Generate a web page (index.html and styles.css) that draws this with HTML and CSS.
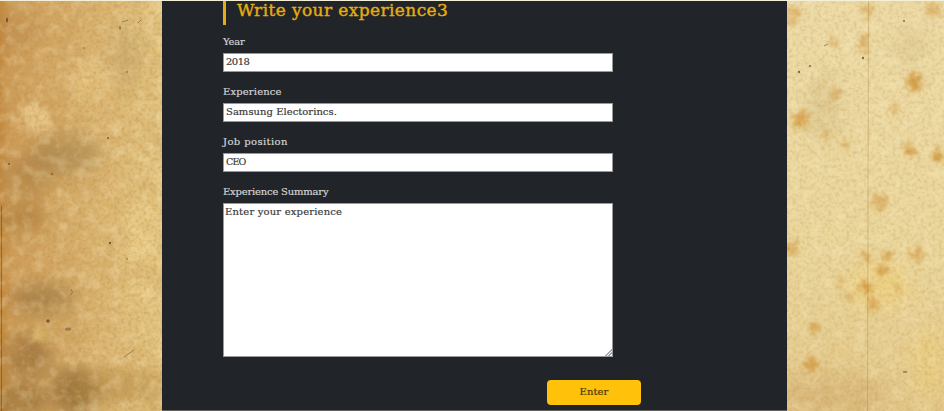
FILE: index.html
```
<!DOCTYPE html>
<html lang="en">
<head>
<meta charset="utf-8">
<title>Write your experience</title>
<link rel="stylesheet" href="styles.css">
</head>
<body>
<svg class="parchment" viewBox="0 0 944 411" aria-hidden="true">
  <defs>
    <linearGradient id="left"><stop offset="0" stop-color="#c4893e"/><stop offset=".07" stop-color="#cf9d59"/><stop offset=".55" stop-color="#dab36f"/><stop offset="1" stop-color="#e5c782"/></linearGradient>
    <linearGradient id="right" x2="0" y2="1"><stop offset="0" stop-color="#eddba6"/><stop offset=".6" stop-color="#ebd79c"/><stop offset="1" stop-color="#e3c88a"/></linearGradient>
    <filter id="soft" x="-50%" y="-50%" width="200%" height="200%"><feGaussianBlur stdDeviation="9"/></filter>
    <filter id="stain" x="-50%" y="-50%" width="200%" height="200%"><feTurbulence type="fractalNoise" baseFrequency=".18" numOctaves="3" seed="4" result="n"/><feGaussianBlur in="SourceGraphic" stdDeviation="2"/><feDisplacementMap in2="n" scale="15" xChannelSelector="R" yChannelSelector="G"/><feGaussianBlur stdDeviation=".9"/></filter>
    <filter id="grain" x="0" y="0" width="100%" height="100%"><feTurbulence type="fractalNoise" baseFrequency=".28" numOctaves="3" seed="8"/><feColorMatrix values="0 0 0 0 .46  0 0 0 0 .27  0 0 0 0 .08  1.5 0 0 0 -.62"/><feGaussianBlur stdDeviation=".35"/></filter>
    <filter id="light" x="0" y="0" width="100%" height="100%"><feTurbulence type="fractalNoise" baseFrequency=".09" numOctaves="4" seed="21"/><feColorMatrix values="0 0 0 0 1  0 0 0 0 .9  0 0 0 0 .6  0 1.6 0 0 -.7"/></filter>
    <filter id="cloud" x="0" y="0" width="100%" height="100%"><feTurbulence type="fractalNoise" baseFrequency=".035" numOctaves="4" seed="13"/><feColorMatrix values="0 0 0 0 .58  0 0 0 0 .34  0 0 0 0 .1  2 0 0 0 -.85"/></filter>
  </defs>
  <rect width="163" height="411" fill="url(#left)"/>
  <rect x="786" width="158" height="411" fill="url(#right)"/>
  <g filter="url(#soft)">
    <ellipse cx="65" cy="153" rx="35" ry="20" fill="#8b6b3b" opacity=".42"/>
    <ellipse cx="28" cy="176" rx="25" ry="20" fill="#92682f" opacity=".4"/>
    <ellipse cx="20" cy="217" rx="26" ry="15" fill="#9a6626" opacity=".5"/>
    <ellipse cx="43" cy="298" rx="32" ry="14" fill="#76552a" opacity=".5"/>
    <ellipse cx="28" cy="355" rx="24" ry="22" fill="#78501f" opacity=".5"/>
    <ellipse cx="75" cy="390" rx="25" ry="24" fill="#6a4519" opacity=".55"/>
    <ellipse cx="20" cy="400" rx="28" ry="16" fill="#6a4519" opacity=".5"/>
    <ellipse cx="125" cy="385" rx="40" ry="17" fill="#a87a30" opacity=".45"/>
    <ellipse cx="20" cy="30" rx="25" ry="20" fill="#a97736" opacity=".25"/>
    <ellipse cx="125" cy="55" rx="17" ry="30" fill="#b2935e" opacity=".35"/>
    <ellipse cx="89" cy="80" rx="18" ry="18" fill="#f3d390" opacity=".5"/>
    <ellipse cx="145" cy="245" rx="20" ry="65" fill="#f0d68f" opacity=".5"/>
    <ellipse cx="824" cy="105" rx="15" ry="35" fill="#c7ad73" opacity=".35"/>
    <ellipse cx="910" cy="45" rx="15" ry="13" fill="#c7ad73" opacity=".4"/>
    <ellipse cx="880" cy="285" rx="30" ry="22" fill="#f1cf70" opacity=".5"/>
    <ellipse cx="929" cy="360" rx="20" ry="35" fill="#edcf79" opacity=".5"/>
    <ellipse cx="830" cy="395" rx="55" ry="22" fill="#c99b5a" opacity=".35"/>
  </g>
  <g filter="url(#stain)">
    <path d="M19 104q16-6 27 5 10 12-5 25-18-4-22-30" fill="#f0d194" opacity=".65"/>
    <ellipse cx="40" cy="332" rx="7" ry="8" fill="#d8b362" opacity=".8"/>
  </g>
  <path d="M0 0h163v411H0z" filter="url(#cloud)" opacity=".5"/>
  <g filter="url(#stain)" fill="#cf9236">
    <g opacity=".8"><circle cx="915" cy="81" r="9"/><circle cx="801" cy="119" r="8"/><circle cx="910" cy="149" r="6"/><circle cx="938" cy="155" r="6"/><circle cx="792" cy="247" r="6"/><circle cx="866" cy="256" r="4"/><circle cx="886" cy="255" r="4"/><circle cx="917" cy="253" r="6"/><circle cx="883" cy="270" r="5"/><circle cx="866" cy="286" r="6"/><circle cx="873" cy="303" r="5"/><circle cx="813" cy="327" r="5"/><circle cx="812" cy="363" r="7"/></g>
    <g opacity=".5"><circle cx="792" cy="15" r="9"/><ellipse cx="867" cy="9" rx="6" ry="7"/><ellipse cx="864" cy="42" rx="6" ry="10"/><circle cx="933" cy="9" r="8"/><circle cx="833" cy="42" r="5"/><circle cx="835" cy="93" r="5"/><circle cx="895" cy="108" r="5"/><circle cx="827" cy="134" r="4"/><circle cx="845" cy="145" r="5"/><circle cx="879" cy="201" r="8"/><circle cx="842" cy="281" r="4"/><circle cx="849" cy="295" r="4"/><circle cx="834" cy="349" r="4"/><circle cx="897" cy="286" r="4"/></g>
  </g>
  <path d="M0 0h163v411H0z" filter="url(#grain)" opacity=".65"/>
  <path d="M786 0h158v411H786z" filter="url(#grain)" opacity=".42"/>
  <rect width="163" height="411" filter="url(#light)" opacity=".42"/>
  <rect x="786" width="158" height="411" filter="url(#light)" opacity=".4"/>
  <path d="M868.500 0L867.500 411" stroke="#a97e3b" stroke-width=".8" opacity=".45"/>
  <path d="M1.500 205V411" stroke="#6b421a" opacity=".5"/>
  <g fill="#4b3217" opacity=".65"><ellipse cx="7" cy="19" rx="1" ry="2.500"/><ellipse cx="120" cy="27" rx=".7" ry="1.800"/><circle cx="127" cy="71" r=".8"/><circle cx="84" cy="47" r=".8"/><circle cx="108" cy="137" r="1"/><circle cx="110" cy="242" r="1.200"/><circle cx="127" cy="258" r=".8"/><circle cx="48" cy="320" r="1.700"/><ellipse cx="68" cy="328" rx="3" ry="1.500" opacity=".6"/><circle cx="799" cy="71" r="1.200"/><circle cx="810" cy="65" r="1"/><circle cx="863" cy="57" r="1.200"/><circle cx="904" cy="20" r="1"/><ellipse cx="905" cy="371" rx="2.500" ry=".8"/><circle cx="9" cy="163" r="1"/><circle cx="52" cy="173" r="1.300" fill="#93571b"/></g>
  <path d="M122 21l6-2M138 22l3-3M70 294q4-2 1-6M824 45l4-2M124 356l10-7" fill="none" stroke="#6b4924" stroke-width=".8" opacity=".65"/>
</svg>
<main class="panel">
  <h1 class="title">Write your experience3</h1>
  <form class="form">
    <label class="label label-year" for="year">Year</label>
    <input class="field field-year" id="year" value="2018">
    <label class="label label-company" for="company">Experience</label>
    <input class="field field-company" id="company" value="Samsung Electorincs.">
    <label class="label label-job" for="job">Job position</label>
    <input class="field field-job" id="job" value="CEO">
    <label class="label" for="summary">Experience Summary</label>
    <textarea class="field summary" id="summary">Enter your experience</textarea>
    <button class="enter" type="button">Enter</button>
  </form>
</main>
</body>
</html>
```
FILE: styles.css
```
* { box-sizing: border-box; }
body {
  margin: 0;
  height: 411px;
  overflow: hidden;
  background: #e3c88b;
  font-family: "DejaVu Serif", serif;
  border-top: 1px solid #f3efd9;
}
.parchment {
  position: absolute;
  inset: 1px 0 0;
  width: 944px;
  height: 411px;
  z-index: -1;
}
.panel {
  width: 625px;
  height: 410px;
  margin-left: 162px;
  padding-left: 61px;
  background: #212429;
  border-bottom: 1px solid #62615e;
}
.title {
  height: 24px;
  margin: 0 0 11px;
  padding-left: 11px;
  border-left: 3px solid #e5ad10;
  color: #e5ad10;
  font-size: 17px;
  font-weight: 400;
  line-height: 19px;
  letter-spacing: .4px;
  -webkit-text-stroke: .4px #e5ad10;
  white-space: nowrap;
}
.form {
  display: flex;
  flex-direction: column;
  align-items: flex-start;
}
.label {
  height: 17px;
  color: #d4d4d4;
  font-size: 10px;
  line-height: 12px;
  letter-spacing: -.2px;
  -webkit-text-stroke: .2px #d4d4d4;
}
.label-company { letter-spacing: .15px; }
.label-job { letter-spacing: .4px; }
.field {
  width: 389.5px;
  height: 19px;
  margin: 0 0 14px;
  padding: 0 2px 3px;
  border: 1px solid #999;
  border-radius: 0;
  background: #fff;
  color: #3a3a3a;
  font: 10px/12px "DejaVu Serif", serif;
  -webkit-text-stroke: .2px #3a3a3a;
}
.field-year { letter-spacing: -.5px; }
.field-company { letter-spacing: .03px; }
.field-job { font-size: 9.5px; letter-spacing: -.8px; }
.summary {
  display: block;
  height: 154px;
  margin-bottom: 23px;
  padding: 2px 1px;
  letter-spacing: .18px;
  resize: none;
  background: #fff linear-gradient(135deg, #fff 48%, #aaa 50% 62%, #eee 64% 70%, #999 72% 84%, #fff 86%) no-repeat right bottom / 7px 7px;
}
.enter {
  width: 94px;
  height: 25px;
  margin-left: 324px;
  padding: 0 0 2px;
  border: 0;
  border-radius: 4px;
  background: #ffc10a;
  color: #49370b;
  font: 10px/12px "DejaVu Serif", serif;
  letter-spacing: .1px;
  -webkit-text-stroke: .2px #49370b;
}
```
